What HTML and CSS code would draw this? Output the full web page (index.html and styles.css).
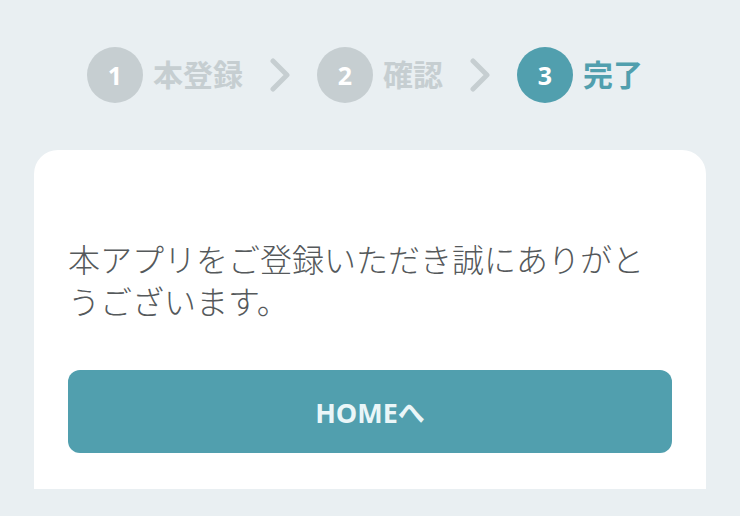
FILE: index.html
```html
<!DOCTYPE html>
<html lang="ja">
<head>
<meta charset="utf-8">
<link rel="stylesheet" href="styles.css">
</head>
<body>
<div class="page">
  <div class="steps">
    <div class="step">
      <span class="num">1</span>
      <span class="label">本登録</span>
    </div>
    <svg class="chev" width="20" height="34" viewBox="0 0 20 34"><path d="M3 3 L17 17 L3 31" fill="none" stroke="#c6ced1" stroke-width="5" stroke-linecap="round" stroke-linejoin="round"/></svg>
    <div class="step">
      <span class="num">2</span>
      <span class="label">確認</span>
    </div>
    <svg class="chev" width="20" height="34" viewBox="0 0 20 34"><path d="M3 3 L17 17 L3 31" fill="none" stroke="#c6ced1" stroke-width="5" stroke-linecap="round" stroke-linejoin="round"/></svg>
    <div class="step active">
      <span class="num">3</span>
      <span class="label">完了</span>
    </div>
  </div>
  <div class="card">
    <p class="message">本アプリをご登録いただき誠にありがとうございます。</p>
    <button class="home-btn">HOMEへ</button>
  </div>
</div>
</body>
</html>
```

FILE: styles.css
```css
html, body {
  margin: 0;
  padding: 0;
  background: #e9eff2;
  height: 100%;
}
body {
  font-family: "Noto Sans CJK JP", "Noto Sans", sans-serif;
}
.page {
  padding-top: 47px;
}
.steps {
  display: flex;
  align-items: center;
  justify-content: center;
  padding-right: 10px;
  height: 56px;
}
.step {
  display: flex;
  align-items: center;
  gap: 10px;
}
.num {
  width: 56px;
  height: 56px;
  border-radius: 50%;
  background: #c6ced1;
  color: #ffffff;
  display: flex;
  align-items: center;
  justify-content: center;
  font-family: "Open Sans", sans-serif;
  font-weight: 700;
  font-size: 25px;
}
.label {
  font-size: 30px;
  font-weight: 700;
  color: #c6ced1;
  line-height: 1;
  padding-bottom: 4px;
}
.step.active .num {
  background: #519fae;
}
.step.active .label {
  color: #519fae;
}
.chev {
  margin: 0 27px;
  display: block;
}
.card {
  margin: 47px 34px 0;
  background: #ffffff;
  border-radius: 24px 24px 0 0;
  padding: 87px 34px 36px;
}
.message {
  margin: 0;
  font-size: 32px;
  line-height: 42px;
  font-weight: 300;
  color: #55595b;
}
.home-btn {
  display: block;
  width: 100%;
  height: 83px;
  margin-top: 49px;
  border: none;
  border-radius: 12px;
  background: #519fae;
  color: #eaf6f8;
  font-family: "Open Sans", "Noto Sans CJK JP", sans-serif;
  font-weight: 700;
  font-size: 27px;
}
```
